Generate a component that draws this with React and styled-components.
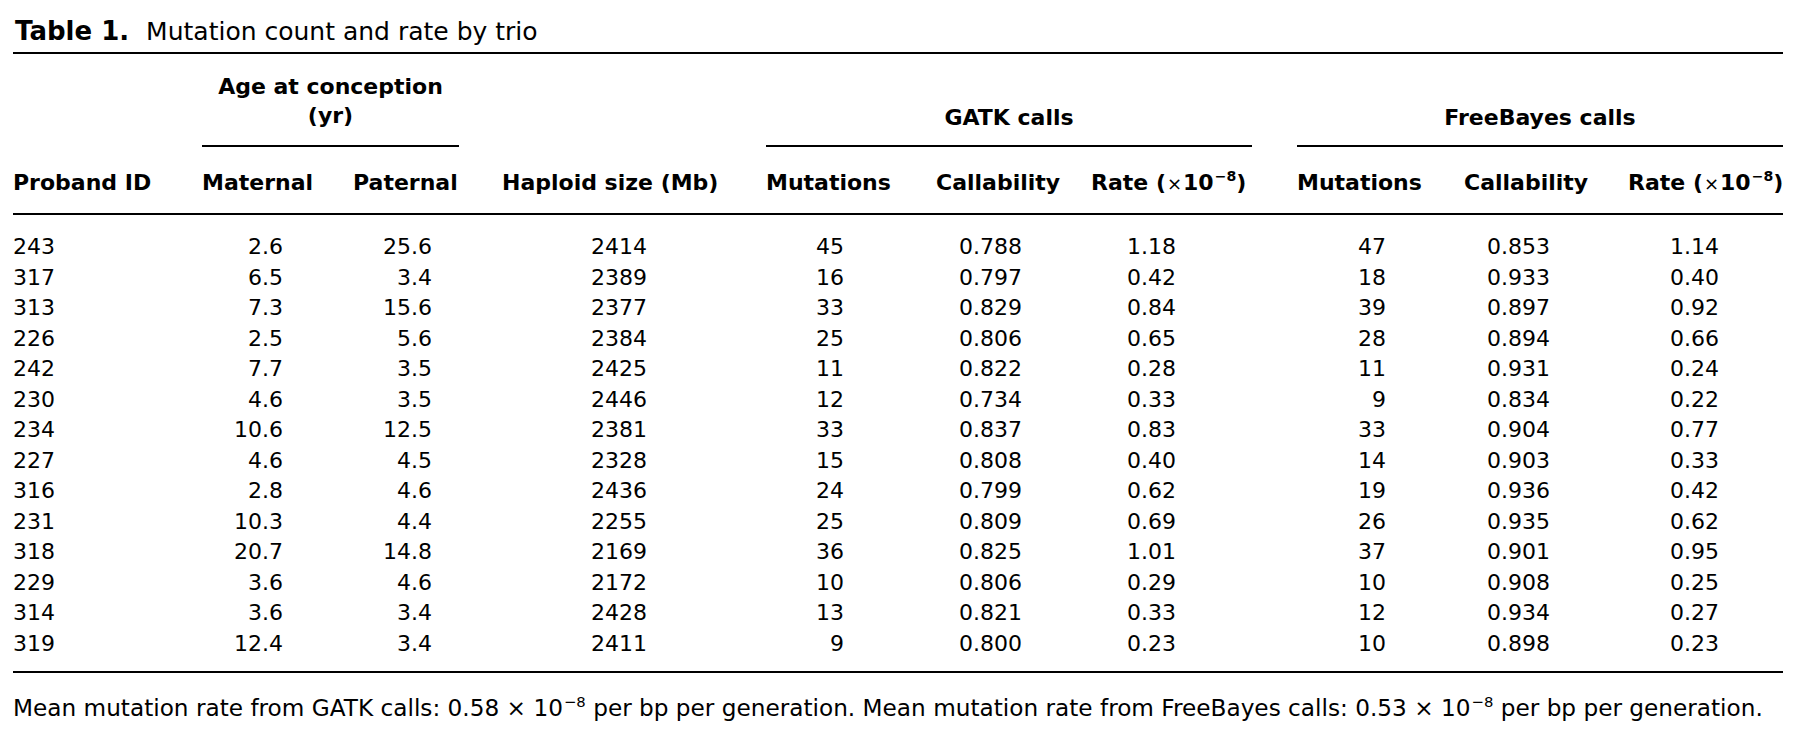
import React from 'react';
import styled, { createGlobalStyle, css } from 'styled-components';

const GlobalStyle = createGlobalStyle`
  html, body { margin: 0; padding: 0; background: #ffffff; }
  body {
    font-family: "DejaVu Sans", "Liberation Sans", sans-serif;
    color: #000000;
  }
`;

const COLUMNS = [
  { key: 'id', width: 189, align: 'left', pad: 0, header: 'Proband ID' },
  { key: 'mat', width: 151, align: 'right', pad: 70, header: 'Maternal' },
  { key: 'pat', width: 149, align: 'right', pad: 70, header: 'Paternal' },
  { key: 'hap', width: 264, align: 'right', pad: 119, header: 'Haploid size (Mb)' },
  { key: 'gm', width: 170, align: 'right', pad: 92, header: 'Mutations' },
  { key: 'gc', width: 155, align: 'right', pad: 69, header: 'Callability' },
  { key: 'gr', width: 206, align: 'right', pad: 121, header: 'rate' },
  { key: 'fm', width: 167, align: 'right', pad: 78, header: 'Mutations' },
  { key: 'fc', width: 164, align: 'right', pad: 78, header: 'Callability' },
  { key: 'fr', width: 155, align: 'right', pad: 64, header: 'rate' },
];

const GROUPS = [
  { start: 2, span: 2, inset: 43, lines: ['Age at conception', '(yr)'] },
  { start: 5, span: 3, inset: 45, lines: ['GATK calls'] },
  { start: 8, span: 3, inset: 0, lines: ['FreeBayes calls'] },
];

const ROWS = [
  ['243', '2.6', '25.6', '2414', '45', '0.788', '1.18', '47', '0.853', '1.14'],
  ['317', '6.5', '3.4', '2389', '16', '0.797', '0.42', '18', '0.933', '0.40'],
  ['313', '7.3', '15.6', '2377', '33', '0.829', '0.84', '39', '0.897', '0.92'],
  ['226', '2.5', '5.6', '2384', '25', '0.806', '0.65', '28', '0.894', '0.66'],
  ['242', '7.7', '3.5', '2425', '11', '0.822', '0.28', '11', '0.931', '0.24'],
  ['230', '4.6', '3.5', '2446', '12', '0.734', '0.33', '9', '0.834', '0.22'],
  ['234', '10.6', '12.5', '2381', '33', '0.837', '0.83', '33', '0.904', '0.77'],
  ['227', '4.6', '4.5', '2328', '15', '0.808', '0.40', '14', '0.903', '0.33'],
  ['316', '2.8', '4.6', '2436', '24', '0.799', '0.62', '19', '0.936', '0.42'],
  ['231', '10.3', '4.4', '2255', '25', '0.809', '0.69', '26', '0.935', '0.62'],
  ['318', '20.7', '14.8', '2169', '36', '0.825', '1.01', '37', '0.901', '0.95'],
  ['229', '3.6', '4.6', '2172', '10', '0.806', '0.29', '10', '0.908', '0.25'],
  ['314', '3.6', '3.4', '2428', '13', '0.821', '0.33', '12', '0.934', '0.27'],
  ['319', '12.4', '3.4', '2411', '9', '0.800', '0.23', '10', '0.898', '0.23'],
];

const gridTemplate = css`
  display: grid;
  grid-template-columns: ${COLUMNS.map((c) => `${c.width}px`).join(' ')};
`;

const Page = styled.div`
  padding: 0 0 0 13px;
  width: 1770px;
`;

const Caption = styled.div`
  font-size: 25px;
  line-height: 30px;
  padding: 16px 0 5px 2px;
  white-space: nowrap;
`;

const CaptionLabel = styled.span`
  font-weight: 700;
  font-size: 26px;
  margin-right: 17px;
`;

const HeadGrid = styled.div`
  ${gridTemplate};
  border-top: 2px solid #000;
  font-size: 22px;
  font-weight: 700;
  line-height: 31px;
`;

const GroupCell = styled.div`
  grid-row: 1;
  grid-column: ${(p) => p.$start} / span ${(p) => p.$span};
  align-self: end;
  margin-right: ${(p) => p.$inset}px;
  padding: 18px 0 ${(p) => (p.$stacked ? 15 : 12)}px;
  line-height: ${(p) => (p.$stacked ? 29 : 31)}px;
  border-bottom: 2px solid #000;
  text-align: center;
  white-space: nowrap;
`;

const GroupLine = styled.div`
  display: block;
`;

const HeadCell = styled.div`
  grid-row: 2;
  padding: 20px 0 14px;
  white-space: nowrap;
  text-align: left;
`;

const Times = styled.span`
  font-weight: 400;
  font-size: 0.82em;
  margin: 0 1px;
`;

const Sup = styled.sup`
  font-size: 0.64em;
  line-height: 0;
  vertical-align: 0.62em;
  margin-left: 1px;
`;

const BodyGrid = styled.div`
  ${gridTemplate};
  border-top: 2px solid #000;
  border-bottom: 2px solid #000;
  padding: 17px 0 12px;
  font-size: 22px;
  line-height: 30.5px;
`;

const DataCell = styled.div`
  text-align: ${(p) => p.$align};
  padding-right: ${(p) => p.$pad}px;
  white-space: nowrap;
`;

const Footnote = styled.p`
  margin: 21px 0 0;
  font-size: 23.2px;
  line-height: 28px;
  white-space: nowrap;
`;

const RateHeader = () => (
  <>
    Rate (<Times>×</Times>10<Sup>−8</Sup>)
  </>
);

const Power = ({ value }) => (
  <>
    {value} × 10<Sup>−8</Sup>
  </>
);

export default function App() {
  return (
    <Page>
      <GlobalStyle />
      <Caption>
        <CaptionLabel>Table 1.</CaptionLabel>
        Mutation count and rate by trio
      </Caption>
      <HeadGrid>
        {GROUPS.map((g) => (
          <GroupCell
            key={g.start}
            $start={g.start}
            $span={g.span}
            $inset={g.inset}
            $stacked={g.lines.length > 1}
          >
            {g.lines.map((l) => (
              <GroupLine key={l}>{l}</GroupLine>
            ))}
          </GroupCell>
        ))}
        {COLUMNS.map((c) => (
          <HeadCell key={c.key}>
            {c.header === 'rate' ? <RateHeader /> : c.header}
          </HeadCell>
        ))}
      </HeadGrid>
      <BodyGrid>
        {ROWS.map((row) =>
          row.map((v, i) => (
            <DataCell key={`${row[0]}-${i}`} $align={COLUMNS[i].align} $pad={COLUMNS[i].pad}>
              {v}
            </DataCell>
          ))
        )}
      </BodyGrid>
      <Footnote>
        Mean mutation rate from GATK calls: <Power value="0.58" /> per bp per generation. Mean
        mutation rate from FreeBayes calls: <Power value="0.53" /> per bp per generation.
      </Footnote>
    </Page>
  );
}
